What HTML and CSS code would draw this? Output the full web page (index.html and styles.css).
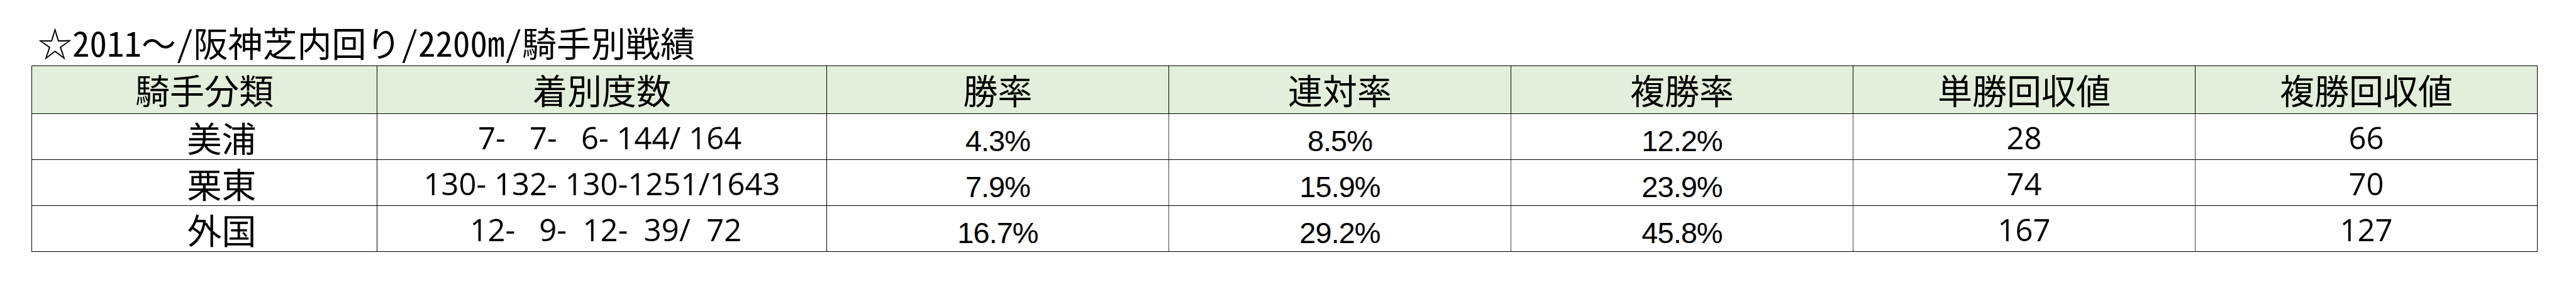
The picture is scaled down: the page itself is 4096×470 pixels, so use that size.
FILE: index.html
```html
<!DOCTYPE html>
<html lang="ja">
<head>
<meta charset="utf-8">
<title>騎手別戦績</title>
<link rel="stylesheet" href="styles.css">
</head>
<body>
<div class="page">
  <h1 class="title">☆2011～/阪神芝内回り/2200m/騎手別戦績</h1>
  <table class="stats">
    <colgroup>
      <col class="c-cat">
      <col class="c-rec">
      <col class="c-val">
      <col class="c-val">
      <col class="c-val">
      <col class="c-val">
      <col class="c-val">
    </colgroup>
    <thead>
      <tr class="head">
        <th>騎手分類</th>
        <th>着別度数</th>
        <th>勝率</th>
        <th>連対率</th>
        <th>複勝率</th>
        <th>単勝回収値</th>
        <th>複勝回収値</th>
      </tr>
    </thead>
    <tbody>
      <tr class="row">
        <td class="cat">　美浦</td>
        <td class="rec">  7-   7-   6- 144/ 164</td>
        <td class="pct">4.3%</td>
        <td class="pct">8.5%</td>
        <td class="pct">12.2%</td>
        <td class="num">28</td>
        <td class="num">66</td>
      </tr>
      <tr class="row">
        <td class="cat">　栗東</td>
        <td class="rec">130- 132- 130-1251/1643</td>
        <td class="pct">7.9%</td>
        <td class="pct">15.9%</td>
        <td class="pct">23.9%</td>
        <td class="num">74</td>
        <td class="num">70</td>
      </tr>
      <tr class="row">
        <td class="cat">　外国</td>
        <td class="rec"> 12-   9-  12-  39/  72</td>
        <td class="pct">16.7%</td>
        <td class="pct">29.2%</td>
        <td class="pct">45.8%</td>
        <td class="num">167</td>
        <td class="num">127</td>
      </tr>
    </tbody>
  </table>
</div>
</body>
</html>
```
FILE: styles.css
```css
html, body {
  margin: 0;
  background: #ffffff;
  color: #000000;
}

.page {
  padding: 39px 0 0 50px;
}

.title {
  margin: 0 0 10px 10px;
  font-family: "Noto Sans Mono CJK JP", "Noto Sans CJK JP", sans-serif;
  font-weight: 400;
  font-size: 55px;
  line-height: 55px;
  white-space: pre;
}

.stats {
  border-collapse: collapse;
  table-layout: fixed;
  width: 3985px;
}

.c-cat { width: 549px; }
.c-rec { width: 715px; }
.c-val { width: 544px; }

.stats th,
.stats td {
  border: 1px solid #000000;
  padding: 0;
  text-align: center;
  vertical-align: bottom;
  white-space: pre;
  color: #000000;
}

.head th {
  background: #e2efda;
  height: 64px;
  padding-bottom: 11px;
  font-family: "Noto Sans CJK JP", sans-serif;
  font-weight: 400;
  font-size: 55px;
  line-height: 55px;
}

.row td {
  height: 72px;
}

.row td.pct,
.row td.num {
  border-left-color: #444444;
  border-right-color: #444444;
}

.row td:last-child {
  border-right-color: #000000;
}

.cat {
  font-family: "Noto Sans CJK JP", sans-serif;
  font-size: 55px;
  line-height: 55px;
}

.row td.cat {
  height: 64px;
  padding-bottom: 8px;
}

.rec,
.num {
  font-family: "Open Sans", "Noto Sans", sans-serif;
  font-size: 49px;
  line-height: 49px;
}

.row td.rec,
.row td.num {
  height: 62px;
  padding-bottom: 10px;
}

.pct {
  font-family: "Liberation Sans", Arial, sans-serif;
  font-size: 47px;
  line-height: 47px;
  letter-spacing: -1px;
}

.row td.pct {
  height: 66px;
  padding-bottom: 6px;
}
```
